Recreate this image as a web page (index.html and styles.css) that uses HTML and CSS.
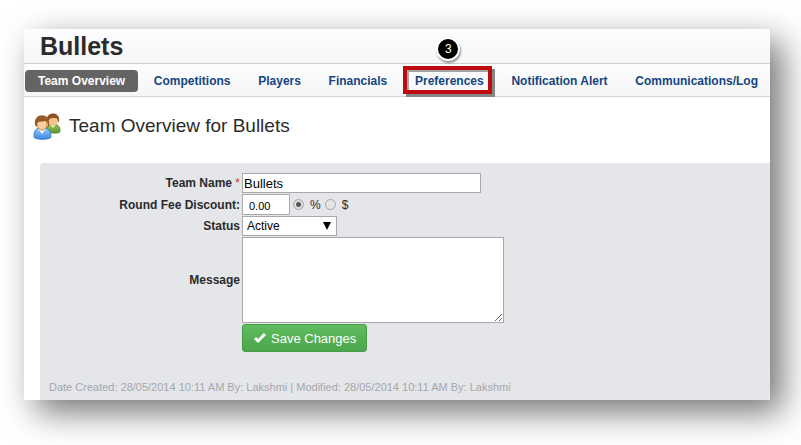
FILE: index.html
```
<!DOCTYPE html>
<html lang="en">
<head>
  <meta charset="UTF-8" />
  <meta name="viewport" content="width=device-width, initial-scale=1.0"/>
  <title>Bullets - Team Overview</title>
  <link rel="stylesheet" href="styles.css">
</head>
<body>

  <div class="window">

    <header class="team-header">
      <h1>Bullets</h1>
    </header>

    <!-- Tabs -->
    <nav class="tabs">
      <a href="#" class="active">Team Overview</a>
      <a href="#">Competitions</a>
      <a href="#">Players</a>
      <a href="#">Financials</a>
      <a href="#" class="marked">Preferences<span class="step">3</span></a>
      <a href="#">Notification Alert</a>
      <a href="#">Communications/Log</a>
    </nav>

    <main>
      <div class="title">
        <svg class="title-icon" width="28" height="28" viewBox="0 0 28 28" aria-hidden="true">
          <defs>
            <linearGradient id="blue" x1="0" y1="0" x2="0" y2="1">
              <stop offset="0" stop-color="#9cc6f8"/>
              <stop offset="1" stop-color="#3c86e0"/>
            </linearGradient>
            <linearGradient id="green" x1="0" y1="0" x2="0" y2="1">
              <stop offset="0" stop-color="#9bc95c"/>
              <stop offset="1" stop-color="#5d9430"/>
            </linearGradient>
          </defs>
          <path d="M13 20c0-6 3-8 7-8s7 2 7 7c0 2-3 2-7 2z" fill="url(#green)" stroke="#568a2c"/>
          <path d="M17 12l3 4 3-4z" fill="#f4f8e8"/>
          <ellipse cx="20" cy="8" rx="5" ry="6" fill="#f3c48c"/>
          <path d="M14 9C12-1 28-1 26 9l-1 2c0-4-1-5-3-5-3 0-5 0-6 2z" fill="#8d5426"/>
          <path d="M1 25c0-7 2-9 8-9s9 2 9 9c0 3-17 3-17 0z" fill="url(#blue)" stroke="#3d7fd0"/>
          <path d="M5 17l4 5 4-5z" fill="#eef6ff"/>
          <ellipse cx="9" cy="12" rx="5" ry="6" fill="#f9d09c" stroke="#c58b4c"/>
          <path d="M2 13C0 0 18 0 16 13l-1 2c0-4-1-6-3-6-3 1-6 0-8 2v4z" fill="#945a2a"/>
        </svg>
        <h2>Team Overview for Bullets</h2>
      </div>

      <form class="panel">
        <div class="fields">
          <label for="teamName">Team Name <span class="required">*</span></label>
          <input class="name-input" id="teamName" type="text" value="Bullets">

          <label for="discount">Round Fee Discount:</label>
          <div class="discount">
            <input class="discount-input" id="discount" type="text" value="0.00">
            <input id="percent" type="radio" name="unit" checked>
            <label for="percent">%</label>
            <input id="dollar" type="radio" name="unit">
            <label for="dollar">$</label>
          </div>

          <label for="status">Status</label>
          <div class="select-wrap">
            <select id="status">
              <option>Active</option>
              <option>Inactive</option>
            </select>
            <svg class="arrow" width="8" height="8" viewBox="0 0 8 8" aria-hidden="true"><path d="M0 0h8L4 8z" fill="#000"/></svg>
          </div>

          <label for="message">Message</label>
          <textarea id="message"></textarea>

          <button class="save" type="button">
            <svg width="14" height="12" viewBox="0 0 14 12" aria-hidden="true"><path d="M2 6l3 3 7-7" fill="none" stroke="#fff" stroke-width="3"/></svg>
            Save Changes
          </button>
        </div>
        <p class="meta">Date Created: 28/05/2014 10:11 AM By: Lakshmi | Modified: 28/05/2014 10:11 AM By: Lakshmi</p>
      </form>
    </main>

  </div>

</body>
</html>
```
FILE: styles.css
```
* {
  box-sizing: border-box;
}

body {
  font-family: "Liberation Sans", Arial, sans-serif;
  font-size: 12px;
  background-color: #fff;
  color: #2b2b2b;
  margin: 0;
  padding: 29px 31px 45px 24px;
}

.window {
  background-color: #fff;
  box-shadow: 12px 12px 32px rgba(0, 0, 0, 0.55);
}

.team-header {
  padding: 3px 16px;
  background: linear-gradient(#fdfdfe, #f5f6f8);
  border-bottom: 1px solid #cfd0d2;
}

h1 {
  margin: 0;
  font-size: 25px;
  line-height: 28px;
}

.tabs {
  display: flex;
  justify-content: space-between;
  padding: 6px 0 4px 1px;
  background: linear-gradient(#fdfdfe, #f5f6f8);
  border-bottom: 1px solid #d2d3d5;
}

.tabs a {
  padding: 0 12px;
  line-height: 22px;
  font-weight: bold;
  white-space: nowrap;
  color: #15457f;
  text-decoration: none;
}

.tabs a.active {
  padding: 0 13px;
  background-color: #646464;
  border-radius: 4px;
  color: #fff;
}

.tabs a.marked {
  position: relative;
}

/* red frame around the tab */
.marked::before {
  content: "";
  position: absolute;
  inset: -4px 4px -2px 0;
  border: 4px solid #bd0a10;
  box-shadow: 3px 3px 0 #858585, inset 2px 2px 0 #a5a5a5;
}

.step {
  position: absolute;
  top: -33px;
  left: 50%;
  width: 24px;
  height: 24px;
  margin-left: -13px;
  border: 2px solid #fff;
  border-radius: 50%;
  background-color: #000;
  box-shadow: 1px 2px 2px rgba(0, 0, 0, 0.4);
  color: #fff;
  font-weight: normal;
  line-height: 20px;
  text-align: center;
}

.title {
  display: flex;
  align-items: center;
  gap: 8px;
  padding: 15px 9px 23px;
}

h2 {
  margin: 0;
  font-size: 19px;
  font-weight: normal;
  line-height: 28px;
}

.panel {
  margin-left: 16px;
  padding: 10px 9px 5px 0;
  background-color: #e4e6ea;
  border-top-left-radius: 4px;
}

.fields {
  display: grid;
  grid-template-columns: 200px 1fr;
  gap: 1px 2px;
  align-items: center;
  justify-items: start;
}

.fields > label {
  justify-self: end;
  font-weight: bold;
}

.required {
  color: #e03030;
  font-weight: normal;
}

input, select, textarea, button {
  font-family: inherit;
  margin: 0;
}

input[type="text"], select, textarea {
  background-color: #fff;
  border: 1px solid #a9a9a9;
  border-radius: 0;
  color: #000;
}

.name-input {
  width: 239px;
  height: 20px;
  padding: 1px;
  font-size: 13px;
}

.discount {
  display: flex;
  align-items: center;
}

.discount .discount-input {
  width: 48px;
  height: 21px;
  margin-right: 3px;
  padding: 2px 6px 0;
  font-size: 11px;
}

input[type="radio"] {
  appearance: none;
  width: 11px;
  height: 11px;
  border: 1px solid #a5a5a5;
  border-radius: 50%;
  background-color: #e6e6e6;
}

input[type="radio"]:checked {
  background: radial-gradient(circle, #555 2px, #ddd 3px);
}

.discount label {
  margin: 0 4px 0 6px;
}

.select-wrap {
  position: relative;
}

select {
  display: block;
  appearance: none;
  width: 95px;
  height: 20px;
  padding: 0 4px;
  font-size: 12px;
}

.arrow {
  position: absolute;
  top: 6px;
  right: 6px;
  pointer-events: none;
}

textarea {
  display: block;
  width: 262px;
  height: 86px;
}

.save {
  grid-column: 2;
  display: flex;
  align-items: center;
  gap: 4px;
  height: 28px;
  padding: 0 10px;
  background: linear-gradient(#5fbd5f, #4ca54c);
  border: 1px solid #489c48;
  border-radius: 3px;
  color: #fff;
  font-size: 13px;
}

.meta {
  margin: 27px 0 0 9px;
  color: #a6a7aa;
  font-size: 11px;
  line-height: 16px;
}
```
